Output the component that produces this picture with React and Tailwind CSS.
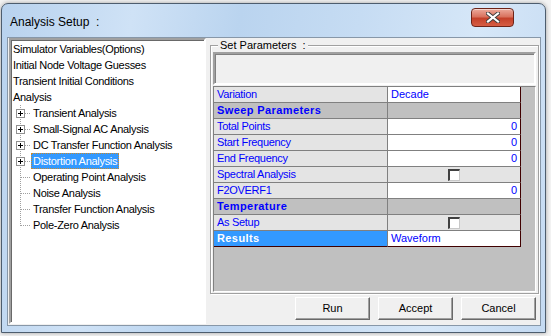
import React from "react";

const treeTop = [
  "Simulator Variables(Options)",
  "Initial Node Voltage Guesses",
  "Transient Initial Conditions",
  "Analysis",
];

const treeChildren = [
  { label: "Transient Analysis", plus: true },
  { label: "Small-Signal AC Analysis", plus: true },
  { label: "DC Transfer Function Analysis", plus: true },
  { label: "Distortion Analysis", plus: true, selected: true },
  { label: "Operating Point Analysis" },
  { label: "Noise Analysis" },
  { label: "Transfer Function Analysis" },
  { label: "Pole-Zero Analysis", last: true },
];

const rows = [
  { label: "Variation", kind: "text", value: "Decade" },
  { label: "Sweep Parameters", kind: "header" },
  { label: "Total Points", kind: "num", value: "0" },
  { label: "Start Frequency", kind: "num", value: "0" },
  { label: "End Frequency", kind: "num", value: "0" },
  { label: "Spectral Analysis", kind: "check" },
  { label: "F2OVERF1", kind: "num", value: "0" },
  { label: "Temperature", kind: "header" },
  { label: "As Setup", kind: "check" },
  { label: "Results", kind: "selected", value: "Waveform" },
];

// dotted connector + optional expand box for a tree child row
function TreeLines({ plus, last }) {
  return (
    <svg width="20" height="16" className="shrink-0" shapeRendering="crispEdges">
      <line x1="9.5" y1="0" x2="9.5" y2={last ? 9 : 16} stroke="#a0a0a0" strokeDasharray="1 1" />
      <line x1="10" y1="8.5" x2="20" y2="8.5" stroke="#a0a0a0" strokeDasharray="1 1" />
      {plus && (
        <>
          <rect x="5.5" y="4.5" width="8" height="8" fill="#fff" stroke="#919191" />
          <line x1="7" y1="8.5" x2="12" y2="8.5" stroke="#000" />
          <line x1="9.5" y1="6" x2="9.5" y2="11" stroke="#000" />
        </>
      )}
    </svg>
  );
}

function Checkbox() {
  return (
    <div className="w-[12px] h-[12px] bg-white border-t-2 border-l-2 border-r border-b border-t-[#404040] border-l-[#404040] border-r-[#c8c8c8] border-b-[#c8c8c8]" />
  );
}

function GridRow({ row, isLast }) {
  const header = row.kind === "header";
  const selected = row.kind === "selected";

  const leftBg = selected ? "bg-[#3399ff]" : header ? "bg-[#c0c0c0]" : "bg-[#e4e4e4]";
  const rightBg = header ? "bg-[#c0c0c0]" : row.kind === "check" ? "bg-[#e4e4e4]" : "bg-white";

  return (
    <div className="flex h-[16px]">
      <div
        className={`w-[174px] h-full flex items-center pl-[3px] border-r border-b border-[#808080] ${leftBg} ${
          selected ? "text-white font-bold tracking-[0.4px]" : header ? "text-[#0000ff] font-bold tracking-[0.4px]" : "text-[#0000ff] tracking-[-0.3px]"
        } ${isLast ? "border-b-[#400000]" : ""}`}
      >
        {row.label}
      </div>
      <div
        className={`w-[133px] h-full flex items-center border-r border-b border-r-[#400000] ${
          isLast ? "border-b-[#400000]" : "border-b-[#808080]"
        } ${rightBg} ${row.kind === "num" ? "justify-end pr-[3px]" : row.kind === "check" ? "justify-center" : "pl-[3px]"} text-[#0000ff]`}
      >
        {row.kind === "check" ? <Checkbox /> : row.value}
      </div>
    </div>
  );
}

function WinButton({ children }) {
  return (
    <button className="w-[75px] h-[23px] bg-[#f0f0f0] text-black text-[11px] border border-t-white border-l-white border-r-[#696969] border-b-[#696969] shadow-[inset_-1px_-1px_0_#a0a0a0]">
      {children}
    </button>
  );
}

export default function App() {
  return (
    <div className="w-[551px] h-[336px] bg-[#f3f3f3] pl-[1px] pt-[3px] overflow-hidden font-['Liberation_Sans',Arial,sans-serif] text-[11px] text-black">
      {/* window frame */}
      <div className="w-[545px] h-[330px] rounded-t-[7px] border border-[#4d5d6e] shadow-[0_0_4px_rgba(0,0,0,0.35)] bg-[linear-gradient(100deg,#b8d2ee_0%,#cfe2f6_22%,#bad4ef_40%,#c6dcf3_60%,#d6e7f8_80%,#c4daf2_100%)] flex flex-col">
        {/* title bar */}
        <div className="h-[33px] flex items-start">
          <div className="mt-[11px] ml-[8px] text-[12px] leading-[15px] text-black">Analysis Setup&nbsp; :</div>
          <div className="ml-auto mr-[31px] mt-[4px] w-[43px] h-[19px] rounded-[4px] border border-[#6e2418] bg-[linear-gradient(180deg,#ecaa9c_0%,#d9735f_45%,#c4412a_55%,#d65d44_100%)] shadow-[inset_0_1px_0_rgba(255,255,255,0.5)] flex items-center justify-center">
            <svg width="14" height="11" viewBox="0 0 14 11">
              <path d="M2 1.5 L12 9.5 M12 1.5 L2 9.5" stroke="#3b3b3b" strokeWidth="4" strokeLinecap="square" />
              <path d="M2 1.5 L12 9.5 M12 1.5 L2 9.5" stroke="#ffffff" strokeWidth="2.2" strokeLinecap="square" />
            </svg>
          </div>
        </div>

        {/* client area */}
        <div className="ml-[5px] w-[534px] h-[289px] bg-[#f0f0f0] border border-[#8797a8] flex pl-[1px]">
          {/* tree */}
          <div className="w-[197px] h-[286px] bg-white border-2 border-t-[#a0a0a0] border-l-[#a0a0a0] border-r-white border-b-white shadow-[inset_1px_1px_0_#696969] pt-[1px]">
            {treeTop.map((t) => (
              <div key={t} className="h-[16px] flex items-center pl-[2px] tracking-[-0.3px]">
                {t}
              </div>
            ))}
            {treeChildren.map((c) => (
              <div key={c.label} className="h-[16px] flex items-center">
                <TreeLines plus={c.plus} last={c.last} />
                {c.selected ? (
                  <div className="h-[16px] flex items-center px-[1px] bg-[#3399ff] text-white border border-dotted border-[#c98a2c] tracking-[-0.3px]">
                    {c.label}
                  </div>
                ) : (
                  <div className="pl-[2px] tracking-[-0.3px]">{c.label}</div>
                )}
              </div>
            ))}
          </div>

          {/* right column */}
          <div className="ml-[4px] flex flex-col">
            <div className="relative mt-[7px] w-[329px] h-[249px] border border-[#a0a0a0] shadow-[inset_1px_1px_0_#fff,1px_1px_0_#fff] pt-[6px] pl-[2px]">
              <div className="absolute -top-[7px] left-[7px] px-[2px] bg-[#f0f0f0] leading-[13px]">Set Parameters&nbsp; :</div>
              <div className="w-[323px] h-[33px] bg-[#f0f0f0] border-2 border-t-[#a0a0a0] border-l-[#a0a0a0] border-r-white border-b-white shadow-[inset_1px_1px_0_#808080]" />
              <div className="mt-[1px] w-[323px] h-[206px] bg-[#c0c0c0] border border-t-[#808080] border-l-[#808080] border-r-white border-b-white">
                {rows.map((r, i) => (
                  <GridRow key={r.label} row={r} isLast={i === rows.length - 1} />
                ))}
              </div>
            </div>

            <div className="mt-[3px] flex justify-end gap-[8px] pr-[3px]">
              <WinButton>Run</WinButton>
              <WinButton>Accept</WinButton>
              <WinButton>Cancel</WinButton>
            </div>
          </div>
        </div>
      </div>
    </div>
  );
}
